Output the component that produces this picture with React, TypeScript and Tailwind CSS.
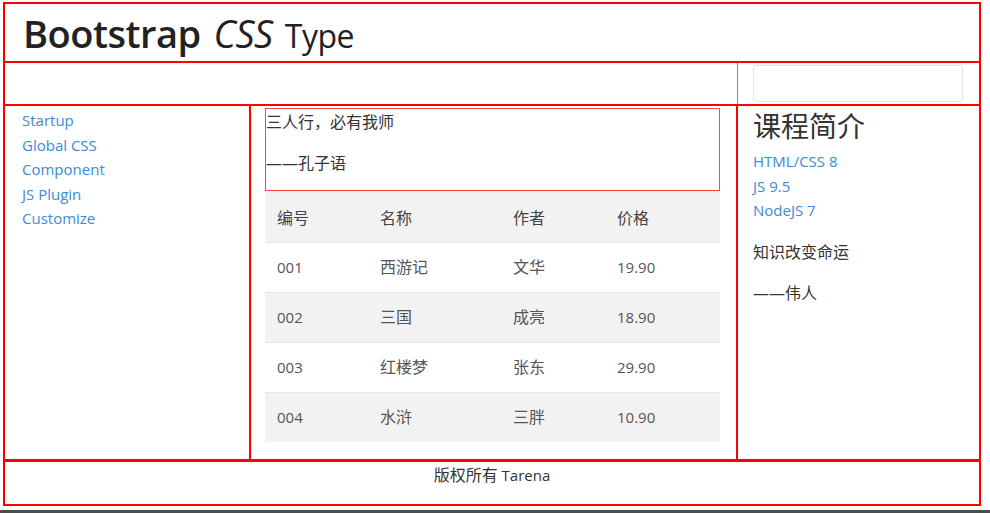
import React from "react";

const sans = { fontFamily: '"Open Sans", "Noto Sans CJK SC", sans-serif' };

const rows = [
  ["001", "西游记", "文华", "19.90"],
  ["002", "三国", "成亮", "18.90"],
  ["003", "红楼梦", "张东", "29.90"],
  ["004", "水浒", "三胖", "10.90"],
];

export default function App() {
  return (
    <div className="bg-white w-[990px] h-[513px] overflow-hidden text-[#333]" style={sans}>
      <div className="ml-[3px] mt-[2px] w-[978px]">
        {/* header */}
        <div className="h-[61px] border-2 border-[#f00] flex items-center pl-[18px]">
          <h1 className="text-[38px] leading-none text-[#222] tracking-[-0.5px] flex items-baseline">
            <span className="font-semibold">Bootstrap</span>
            <i className="font-normal ml-[13px]">CSS</i>
            <span className="text-[32px] ml-[12px]">Type</span>
          </h1>
        </div>
        {/* row 2 */}
        <div className="h-[43px] border-x-2 border-b-2 border-[#f00] flex">
          <div className="w-[733px] border-r border-[#f55]" />
          <div className="pl-[15px] pt-[2px]">
            <div className="w-[210px] h-[37px] border border-[#e4e4e4] rounded-[3px]" />
          </div>
        </div>
        {/* main */}
        <div className="h-[355px] border-x-2 border-b-2 border-[#f00] flex">
          <div className="w-[246px] border-r-2 border-[#f00] pl-[17px] pt-[2px] flex flex-col text-[15px] leading-[24.5px] text-[#3b8bd8]">
            <span>Startup</span>
            <span>Global CSS</span>
            <span>Component</span>
            <span>JS Plugin</span>
            <span>Customize</span>
          </div>
          <div className="w-[487px] border-r-2 border-[#f00] pl-[14px] pt-[2px]">
            <div className="w-[455px] h-[83px] border border-[#f44] pt-[3px] text-[16px] leading-[20px] text-[#333]">
              <p className="mb-[21px]">三人行，必有我师</p>
              <p>——孔子语</p>
            </div>
            <table className="w-[455px] border-collapse text-[15px] text-[#555]">
              <thead>
                <tr className="h-[51px] bg-[#f2f2f2] text-[#444] text-[16px]">
                  <th className="w-[103px] pl-[12px] pt-[3px] text-left font-normal">编号</th>
                  <th className="w-[133px] pl-[12px] pt-[3px] text-left font-normal">名称</th>
                  <th className="w-[104px] pl-[12px] pt-[3px] text-left font-normal">作者</th>
                  <th className="pl-[12px] pt-[3px] text-left font-normal">价格</th>
                </tr>
              </thead>
              <tbody>
                {rows.map((r, i) => (
                  <tr
                    key={r[0]}
                    className={
                      i % 2 === 1
                        ? "h-[50px] bg-[#f2f2f2] border-t border-[#e6e6e6]"
                        : "h-[50px] bg-white border-t border-[#e6e6e6]"
                    }
                  >
                    {r.map((c, j) => (
                      <td key={j} className={j === 1 || j === 2 ? "pl-[12px] text-[16px]" : "pl-[12px]"}>
                        {c}
                      </td>
                    ))}
                  </tr>
                ))}
              </tbody>
            </table>
          </div>
          <div className="flex-1 pl-[15px] pt-[5px]">
            <h3 className="text-[28px] leading-[30px] text-[#333]">课程简介</h3>
            <div className="mt-[8px] flex flex-col text-[15px] leading-[24.5px] text-[#3b8bd8]">
              <span>HTML/CSS 8</span>
              <span>JS 9.5</span>
              <span>NodeJS 7</span>
            </div>
            <div className="mt-[19px] text-[16px] leading-[20px] text-[#333]">
              <p className="mb-[21px]">知识改变命运</p>
              <p>——伟人</p>
            </div>
          </div>
        </div>
        {/* footer */}
        <div className="h-[45px] border-x-2 border-b-2 border-t border-[#f00] flex justify-center pt-[3px] text-[15px] leading-[20px] text-[#333]">
          <span className="text-[16px]">版权所有</span>&nbsp;Tarena
        </div>
      </div>
      <div className="mt-[4px] h-[6px] bg-[#4d4d4d]" />
    </div>
  );
}
